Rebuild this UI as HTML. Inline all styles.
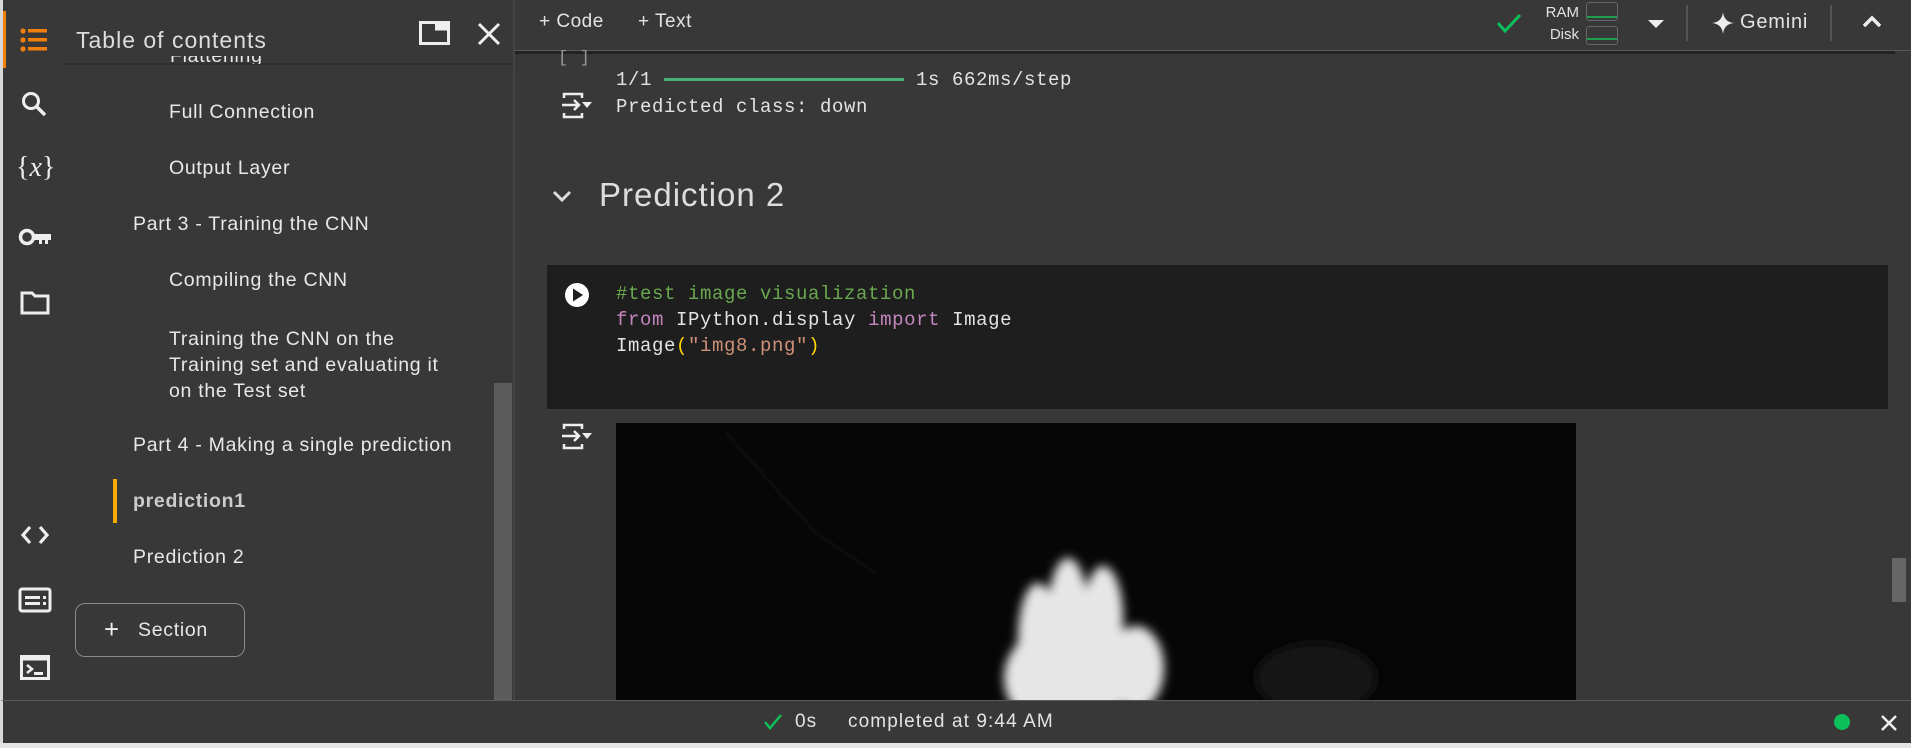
<!DOCTYPE html>
<html><head><meta charset="utf-8"><style>
*{margin:0;padding:0;box-sizing:border-box}
body{width:1911px;height:748px;background:#383838;font-family:"Liberation Sans",sans-serif;color:#e3e3e3;position:relative;overflow:hidden}
.a{position:absolute;white-space:nowrap}
.toc{font-size:19.5px;color:#e8e8e8;letter-spacing:0.7px}
.mono{font-family:"Liberation Mono",monospace;font-size:19px;letter-spacing:0.6px}
</style></head><body>
<div class="a" style="left:0;top:0;width:3px;height:748px;background:#d8d8d8"></div>
<div class="a" style="left:0;top:743px;width:1911px;height:5px;background:#e4e4e4"></div>
<div class="a" style="left:3px;top:11px;width:3px;height:57px;background:#f27f0c"></div>
<!-- rail icons -->
<svg class="a" style="left:18px;top:26px" width="32" height="28" viewBox="0 0 32 28"><g fill="#f27f0c"><circle cx="5" cy="5" r="2.6"/><circle cx="5" cy="14" r="2.6"/><circle cx="5" cy="23" r="2.6"/><rect x="10" y="3" width="19" height="3.5"/><rect x="10" y="12" width="19" height="3.5"/><rect x="10" y="21" width="19" height="3.5"/></g></svg>
<svg class="a" style="left:20px;top:90px" width="30" height="30" viewBox="0 0 30 30"><circle cx="11" cy="11" r="7.5" fill="none" stroke="#eee" stroke-width="3"/><path d="M16 16l9 9" stroke="#eee" stroke-width="3.5"/></svg>
<div class="a" style="left:16px;top:152px;font-family:'Liberation Serif',serif;font-size:28px;color:#eee">{<i>x</i>}</div>
<svg class="a" style="left:18px;top:226px" width="36" height="22" viewBox="0 0 36 22"><circle cx="9" cy="11" r="6.5" fill="none" stroke="#eee" stroke-width="3.5"/><path d="M15 8h18v6h-3v4h-3v-4h-3v4h-3v-4h-6z" fill="#eee"/></svg>
<svg class="a" style="left:20px;top:290px" width="30" height="26" viewBox="0 0 30 26"><path d="M2 3h10l3 3h13v17H2z" fill="none" stroke="#eee" stroke-width="3"/></svg>
<svg class="a" style="left:20px;top:524px" width="30" height="22" viewBox="0 0 30 22"><path d="M10 3L3 11l7 8M20 3l7 8-7 8" fill="none" stroke="#eee" stroke-width="3.2"/></svg>
<svg class="a" style="left:18px;top:587px" width="34" height="26" viewBox="0 0 34 26"><rect x="2" y="2" width="30" height="22" rx="2" fill="none" stroke="#eee" stroke-width="3"/><rect x="7" y="9" width="15" height="3" fill="#eee"/><rect x="7" y="15" width="15" height="3" fill="#eee"/><rect x="25" y="9" width="3" height="3" fill="#eee"/><rect x="25" y="15" width="3" height="3" fill="#eee"/></svg>
<svg class="a" style="left:20px;top:655px" width="30" height="25" viewBox="0 0 30 25"><rect x="1.5" y="1.5" width="27" height="22" fill="none" stroke="#eee" stroke-width="3"/><rect x="1.5" y="1.5" width="27" height="4" fill="#eee"/><path d="M7 10l5 4-5 4" fill="none" stroke="#eee" stroke-width="2.5"/><rect x="14" y="17" width="9" height="3" fill="#eee"/></svg>
<!-- sidebar -->
<div class="a" style="left:513px;top:0;width:2px;height:700px;background:#444"></div>
<div class="a" style="left:64px;top:63px;width:449px;height:2px;background:#303030"></div>
<div class="a" style="left:76px;top:27px;font-size:23px;color:#ddd;letter-spacing:1px">Table of contents</div>
<svg class="a" style="left:419px;top:21px" width="32" height="24" viewBox="0 0 32 24"><rect x="1.5" y="1.5" width="28" height="21" fill="none" stroke="#eee" stroke-width="3"/><rect x="16" y="1.5" width="13.5" height="8" fill="#eee"/></svg>
<svg class="a" style="left:477px;top:22px" width="24" height="24" viewBox="0 0 24 24"><path d="M2 2l20 20M22 2L2 22" stroke="#eee" stroke-width="3"/></svg>
<div class="a toc" style="left:170px;top:56px;height:8px;overflow:hidden;line-height:0">Flattening</div>
<div class="a toc" style="left:169px;top:101px">Full Connection</div>
<div class="a toc" style="left:169px;top:157px">Output Layer</div>
<div class="a toc" style="left:133px;top:213px">Part 3 - Training the CNN</div>
<div class="a toc" style="left:169px;top:269px">Compiling the CNN</div>
<div class="a toc" style="left:169px;top:326px;line-height:26px">Training the CNN on the<br>Training set and evaluating it<br>on the Test set</div>
<div class="a toc" style="left:133px;top:434px">Part 4 - Making a single prediction</div>
<div class="a" style="left:113px;top:479px;width:4px;height:44px;background:#f9ab00"></div>
<div class="a toc" style="left:133px;top:490px;font-weight:bold;color:#ccc">prediction1</div>
<div class="a toc" style="left:133px;top:546px">Prediction 2</div>
<div class="a" style="left:75px;top:603px;width:170px;height:54px;border:1px solid #8a8a8a;border-radius:10px"></div>
<div class="a" style="left:104px;top:614px;font-size:26px;color:#eee">+</div>
<div class="a toc" style="left:138px;top:619px">Section</div>
<div class="a" style="left:494px;top:383px;width:18px;height:317px;background:#5c5c5c"></div>
<!-- top bar -->
<div class="a" style="left:515px;top:50px;width:1396px;height:1px;background:#5a5a5a"></div>
<div class="a" style="left:515px;top:51px;width:1380px;height:3px;background:#222"></div>
<div class="a" style="left:539px;top:11px;font-size:19px;letter-spacing:0.5px">+ Code</div>
<div class="a" style="left:638px;top:11px;font-size:19px;letter-spacing:0.5px">+ Text</div>
<svg class="a" style="left:1496px;top:12px" width="26" height="22" viewBox="0 0 26 22"><path d="M2 11l7 8L24 3" fill="none" stroke="#0dbf5b" stroke-width="3"/></svg>
<div class="a" style="left:1543px;top:2px;font-size:15px;line-height:22px;text-align:right;width:36px">RAM<br>Disk</div>
<div class="a" style="left:1586px;top:2px;width:32px;height:19px;border:1px solid #666;border-radius:3px"><div style="position:absolute;left:0;right:0;bottom:2px;height:2px;background:#1e9e4e"></div></div>
<div class="a" style="left:1586px;top:26px;width:32px;height:19px;border:1px solid #666;border-radius:3px"><div style="position:absolute;left:0;right:0;top:11px;height:2px;background:#1e9e4e"></div></div>
<svg class="a" style="left:1647px;top:18px" width="18" height="12"><path d="M1 2h16L9 10z" fill="#eee"/></svg>
<div class="a" style="left:1686px;top:5px;width:2px;height:36px;background:#555"></div>
<svg class="a" style="left:1712px;top:12px" width="22" height="22" viewBox="0 0 22 22"><path d="M11 0Q12 10 22 11Q12 12 11 22Q10 12 0 11Q10 10 11 0z" fill="#eee"/></svg>
<div class="a" style="left:1740px;top:11px;font-size:20px;letter-spacing:0.8px">Gemini</div>
<div class="a" style="left:1830px;top:5px;width:2px;height:36px;background:#555"></div>
<svg class="a" style="left:1862px;top:14px" width="20" height="14"><path d="M2 12l8-8 8 8" fill="none" stroke="#eee" stroke-width="3.5"/></svg>
<!-- content -->
<div class="a mono" style="left:558px;top:49px;color:#999;font-size:17px">[ ]</div>
<div class="a mono" style="left:616px;top:69px">1/1</div>
<div class="a" style="left:664px;top:78px;width:240px;height:3px;background:#49b077"></div>
<div class="a mono" style="left:916px;top:69px">1s 662ms/step</div>
<svg class="a" style="left:560px;top:91px" width="36" height="30" viewBox="0 0 36 30"><path d="M4 7V3h18v4M4 22v4h18v-4" fill="none" stroke="#eee" stroke-width="2.5"/><path d="M2 14h17M14 9l5 5-5 5" fill="none" stroke="#eee" stroke-width="2.5"/><path d="M22 11h10l-5 6z" fill="#eee"/></svg>
<div class="a mono" style="left:616px;top:96px">Predicted class: down</div>
<svg class="a" style="left:552px;top:189px" width="20" height="14"><path d="M2 3l8 8 8-8" fill="none" stroke="#ddd" stroke-width="3"/></svg>
<div class="a" style="left:599px;top:176px;font-size:33px;color:#ddd;letter-spacing:1px">Prediction 2</div>
<div class="a" style="left:547px;top:265px;width:1341px;height:144px;background:#1e1e1e"></div>
<svg class="a" style="left:562px;top:280px" width="30" height="30"><circle cx="15" cy="15" r="12" fill="#fff"/><path d="M11 8.5v13l10-6.5z" fill="#1e1e1e"/></svg>
<div class="a mono" style="left:616px;top:283px;color:#6aa84f">#test image visualization</div>
<div class="a mono" style="left:616px;top:309px"><span style="color:#c586c0">from</span> IPython.display <span style="color:#c586c0">import</span> Image</div>
<div class="a mono" style="left:616px;top:335px">Image<span style="color:#ffd700">(</span><span style="color:#ce9178">"img8.png"</span><span style="color:#ffd700">)</span></div>
<svg class="a" style="left:560px;top:422px" width="36" height="30" viewBox="0 0 36 30"><path d="M4 7V3h18v4M4 22v4h18v-4" fill="none" stroke="#eee" stroke-width="2.5"/><path d="M2 14h17M14 9l5 5-5 5" fill="none" stroke="#eee" stroke-width="2.5"/><path d="M22 11h10l-5 6z" fill="#eee"/></svg>
<svg class="a" style="left:616px;top:423px" width="960" height="277" viewBox="0 0 960 277"><defs><filter id="b"><feGaussianBlur stdDeviation="5"/></filter></defs><rect width="960" height="277" fill="#060606"/><path d="M110 10L200 110L260 150" stroke="#0c0c0c" stroke-width="4" fill="none"/><g fill="#e6e6e6" filter="url(#b)"><ellipse cx="450" cy="255" rx="62" ry="55"/><ellipse cx="422" cy="215" rx="20" ry="55"/><ellipse cx="452" cy="190" rx="20" ry="55"/><ellipse cx="487" cy="195" rx="20" ry="52"/><ellipse cx="520" cy="245" rx="28" ry="42"/></g><ellipse cx="700" cy="255" rx="60" ry="35" fill="#151515" filter="url(#b)"/></svg>
<div class="a" style="left:1892px;top:558px;width:14px;height:44px;background:#666"></div>
<!-- status -->
<div class="a" style="left:0;top:700px;width:1911px;height:43px;background:#383838;border-top:1px solid #5a5a5a;border-left:3px solid #d8d8d8"></div>
<svg class="a" style="left:763px;top:713px" width="20" height="18"><path d="M2 9l5 6L18 2" fill="none" stroke="#0dbf5b" stroke-width="2.5"/></svg>
<div class="a" style="left:795px;top:711px;font-size:19px;letter-spacing:1px">0s</div>
<div class="a" style="left:848px;top:711px;font-size:19px;letter-spacing:1.1px">completed at 9:44 AM</div>
<div class="a" style="left:1834px;top:714px;width:16px;height:16px;border-radius:50%;background:#0dbf5b"></div>
<svg class="a" style="left:1880px;top:714px" width="18" height="18"><path d="M2 2l14 14M16 2L2 16" stroke="#eee" stroke-width="2.5"/></svg>
</body></html>
